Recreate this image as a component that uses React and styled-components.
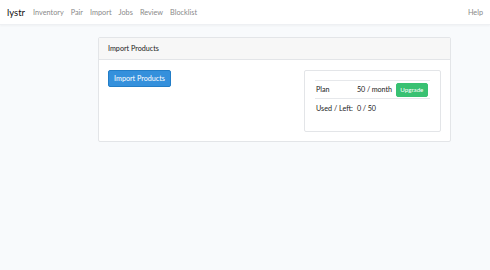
import React from 'react';
import styled, { createGlobalStyle } from 'styled-components';

const GlobalStyle = createGlobalStyle`
  html, body {
    margin: 0;
    padding: 0;
    background: #f8fafc;
    font-family: Lato, "Noto Sans", sans-serif;
    color: #212529;
  }
  * { box-sizing: border-box; }
`;

const Page = styled.div`
  min-height: 270px;
  background: #f8fafc;
`;

const NavBar = styled.nav`
  height: 25px;
  background: #ffffff;
  border-bottom: 1px solid #eef0f3;
  box-shadow: 0 1px 2px rgba(0, 0, 0, 0.04);
  display: flex;
  align-items: center;
  padding: 0 7px;
`;

const Brand = styled.div`
  font-size: 9.5px;
  color: #111;
  margin-right: 8px;
`;

const NavLinks = styled.div`
  display: flex;
  align-items: center;
  gap: 7px;
  flex: 1;
`;

const NavLink = styled.a`
  font-size: 7.3px;
  color: #8a8a8a;
  text-decoration: none;
`;

const Main = styled.main`
  padding: 12px 0 0 98px;
`;

const Card = styled.section`
  width: 353px;
  background: #fff;
  border: 1px solid #e3e5e8;
  border-radius: 2px;
`;

const CardHeader = styled.header`
  height: 22px;
  background: #f7f7f7;
  border-bottom: 1px solid #e3e5e8;
  display: flex;
  align-items: center;
  padding: 0 9px;
  font-size: 7.2px;
  color: #222;
`;

const CardBody = styled.div`
  display: flex;
  justify-content: space-between;
  align-items: flex-start;
  padding: 10px 9px 9px 9px;
`;

const Button = styled.button`
  font-family: inherit;
  color: #fff;
  background: ${p => p.$variant === 'success' ? '#38c172' : '#3490dc'};
  border: 1px solid ${p => p.$variant === 'success' ? '#38c172' : '#227dc7'};
  border-radius: 2px;
  padding: 0;
  height: ${p => p.$small ? '14px' : '17px'};
  width: ${p => p.$small ? '32px' : '63px'};
  font-size: ${p => p.$small ? '6.2px' : '7.2px'};
  display: flex;
  align-items: center;
  justify-content: center;
  cursor: pointer;
`;

const PlanBox = styled.div`
  width: 137px;
  height: 62px;
  border: 1px solid #e3e5e8;
  border-radius: 2px;
  padding: 9px 10px 0 10px;
`;

const Table = styled.div`
  border-top: 1px solid #e6e8eb;
`;

const Row = styled.div`
  display: flex;
  align-items: center;
  height: 18px;
  border-bottom: ${p => p.$last ? 'none' : '1px solid #e6e8eb'};
  font-size: 7.2px;
  color: #222;
`;

const Label = styled.div`
  width: 42px;
  padding-left: 1px;
`;

const Value = styled.div`
  margin-right: 4px;
  letter-spacing: -0.1px;
`;

export default function App() {
  const links = ['Inventory', 'Pair', 'Import', 'Jobs', 'Review', 'Blocklist'];
  return (
    <Page>
      <GlobalStyle />
      <NavBar>
        <Brand>lystr</Brand>
        <NavLinks>
          {links.map(l => <NavLink key={l}>{l}</NavLink>)}
        </NavLinks>
        <NavLink>Help</NavLink>
      </NavBar>
      <Main>
        <Card>
          <CardHeader>Import Products</CardHeader>
          <CardBody>
            <Button>Import Products</Button>
            <PlanBox>
              <Table>
                <Row>
                  <Label>Plan</Label>
                  <Value>50 / month</Value>
                  <Button $variant="success" $small>Upgrade</Button>
                </Row>
                <Row $last>
                  <Label>Used / Left:</Label>
                  <Value>0 / 50</Value>
                </Row>
              </Table>
            </PlanBox>
          </CardBody>
        </Card>
      </Main>
    </Page>
  );
}
